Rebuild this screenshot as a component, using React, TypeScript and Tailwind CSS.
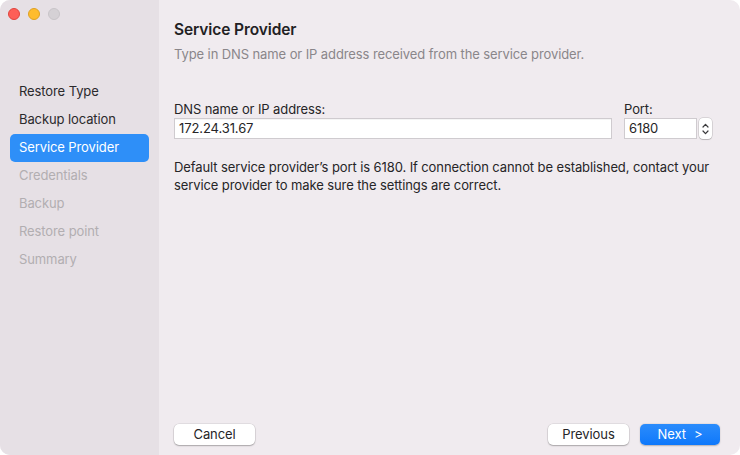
import React from "react";

function TrafficLights() {
  return (
    <div className="-ml-[2px] flex items-center gap-[8px] pt-[8px]">
      <span className="h-[12px] w-[12px] rounded-full border border-[#e0443e] bg-[#fe5f57]" />
      <span className="h-[12px] w-[12px] rounded-full border border-[#dea123] bg-[#febc2e]" />
      <span className="h-[12px] w-[12px] rounded-full border border-[#c8c4c8] bg-[#d5d1d5]" />
    </div>
  );
}

const steps = [
  { label: "Restore Type", state: "done" },
  { label: "Backup location", state: "done" },
  { label: "Service Provider", state: "active" },
  { label: "Credentials", state: "todo" },
  { label: "Backup", state: "todo" },
  { label: "Restore point", state: "todo" },
  { label: "Summary", state: "todo" },
];

function Sidebar() {
  return (
    <aside className="flex w-[159px] shrink-0 flex-col bg-[#e6e0e5] px-[10px]">
      <TrafficLights />
      <nav className="mt-[58px] flex flex-col">
        {steps.map((s) => (
          <div
            key={s.label}
            className={
              s.state === "active"
                ? "flex h-[28px] items-center rounded-[5px] bg-[#2e8ff8] px-[9px] text-white"
                : s.state === "done"
                ? "flex h-[28px] items-center px-[9px] text-[#2b2a2c]"
                : "flex h-[28px] items-center px-[9px] text-[#b2aeb1]"
            }
          >
            {s.label}
          </div>
        ))}
      </nav>
    </aside>
  );
}

function Stepper() {
  return (
    <div className="ml-[2px] flex h-[21px] w-[13px] flex-col items-center justify-center rounded-[4px] bg-white shadow-[0_0_0_0.5px_rgba(0,0,0,0.2),0_1px_1px_rgba(0,0,0,0.15)]">
      <svg width="7" height="5" viewBox="0 0 7 5" className="mb-[2px]">
        <path d="M1 4 L3.5 1.3 L6 4" fill="none" stroke="#3a3a3c" strokeWidth="1.2" strokeLinecap="round" strokeLinejoin="round" />
      </svg>
      <svg width="7" height="5" viewBox="0 0 7 5">
        <path d="M1 1 L3.5 3.7 L6 1" fill="none" stroke="#3a3a3c" strokeWidth="1.2" strokeLinecap="round" strokeLinejoin="round" />
      </svg>
    </div>
  );
}

function Button({ children, primary }: { children: React.ReactNode; primary?: boolean }) {
  return (
    <button
      type="button"
      className={
        primary
          ? "flex h-[21px] w-[80px] items-center justify-center rounded-[5px] bg-gradient-to-b from-[#2a8cfc] to-[#0d78fb] text-white shadow-[0_0.5px_1.5px_rgba(0,0,0,0.25)]"
          : "flex h-[21px] w-[81px] items-center justify-center rounded-[5px] bg-white text-[#262527] shadow-[0_0_0_0.5px_rgba(0,0,0,0.12),0_1px_1.5px_rgba(0,0,0,0.25)]"
      }
    >
      {children}
    </button>
  );
}

export default function App() {
  return (
    <div className="h-[455px] w-[740px] bg-white font-['Inter','Liberation_Sans',sans-serif] text-[13px] tracking-[-0.1px]">
      <div className="flex h-full w-full overflow-hidden rounded-[10px] bg-[#f0ebef]">
        <Sidebar />
        <main className="flex flex-1 flex-col pl-[15px] pr-[20px]">
          <h1 className="mt-[19px] text-[15.5px] font-semibold leading-[22px] text-[#222123]">Service Provider</h1>
          <p className="mt-[3px] leading-[20px] text-[#8a868a]">
            Type in DNS name or IP address received from the service provider.
          </p>

          <div className="mt-[37px] flex items-end">
            <div className="flex w-[438px] flex-col">
              <label className="leading-[16px] text-[#262527]">DNS name or IP address:</label>
              <div className="mt-[1px] flex h-[21px] items-center border border-[#cfcbcf] bg-white px-[4px] text-[#262527] shadow-[inset_0_0.5px_0_rgba(0,0,0,0.08)]">
                172.24.31.67
              </div>
            </div>
            <div className="ml-[12px] flex flex-col">
              <label className="leading-[16px] text-[#262527]">Port:</label>
              <div className="mt-[1px] flex items-center">
                <div className="flex h-[21px] w-[73px] items-center border border-[#cfcbcf] bg-white px-[4px] text-[#262527]">
                  6180
                </div>
                <Stepper />
              </div>
            </div>
          </div>

          <p className="mt-[19px] leading-[18px] text-[#262527]">
            Default service provider’s port is 6180. If connection cannot be established, contact your service provider to make sure the settings are correct.
          </p>

          <div className="mt-auto mb-[10px] flex items-center">
            <Button>Cancel</Button>
            <div className="flex-1" />
            <Button>Previous</Button>
            <div className="w-[11px]" />
            <Button primary>
              <span>Next</span>
              <span className="ml-[8px]">&gt;</span>
            </Button>
          </div>
        </main>
      </div>
    </div>
  );
}
